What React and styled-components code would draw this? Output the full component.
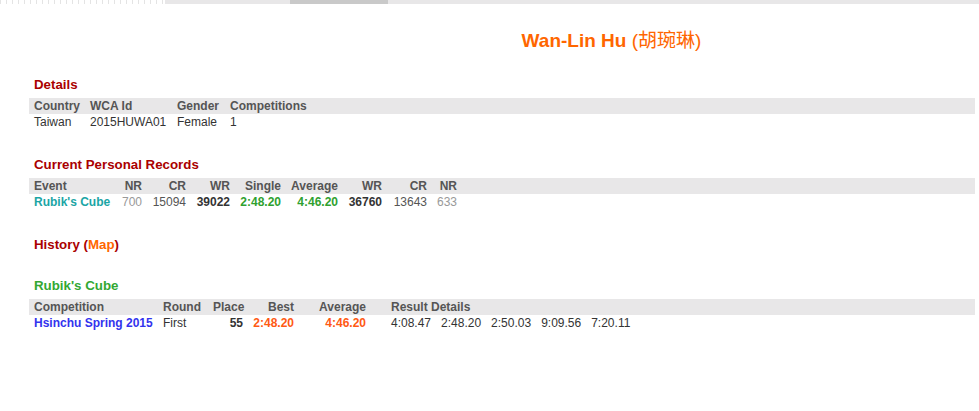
import React from "react";
import styled, { createGlobalStyle } from "styled-components";

const GlobalStyle = createGlobalStyle`
  html, body {
    margin: 0;
    padding: 0;
    background: #fff;
  }
  body {
    font-family: "Liberation Sans", Arial, sans-serif;
    font-size: 12px;
    color: #333;
  }
`;

const band = "#e8e7e8";

const TopStrip = styled.div`
  display: flex;
  height: 4px;
`;

const StripPart = styled.div`
  width: ${({ $w }) => $w};
  flex: ${({ $grow }) => ($grow ? 1 : "none")};
  background: ${({ $kind }) =>
    $kind === "gray"
      ? "#c9c9c9"
      : $kind === "dots"
      ? "repeating-linear-gradient(90deg, #e4e4e4 0 1px, #fff 1px 6px)"
      : band};
`;

const Page = styled.div`
  padding: 0 4px 40px 29px;
`;

const Title = styled.h1`
  margin: 25px 0 0;
  padding-left: 219px;
  text-align: center;
  font-size: 19px;
  line-height: 24px;
  font-weight: bold;
  color: #f60;
`;

const TitleCjk = styled.span`
  font-weight: normal;
  font-family: "Liberation Sans", "Noto Sans CJK TC", sans-serif;
`;

const Heading = styled.h2`
  margin: ${({ $top }) => $top || "27px"} 0 5px;
  padding-left: 5px;
  font-size: 13.3px;
  line-height: 16px;
  font-weight: bold;
  color: ${({ $color }) => $color || "#a00"};
`;

const MapLink = styled.span`
  color: #f60;
`;

const Row = styled.div`
  display: grid;
  grid-template-columns: ${({ $cols }) => $cols};
  line-height: 16px;
  font-size: 12px;
`;

const HeadRow = styled(Row)`
  background: ${band};
  font-weight: bold;
  color: #555;
`;

const Cell = styled.div`
  padding: 0 ${({ $pr }) => $pr || "5px"} 0 5px;
  white-space: nowrap;
  text-align: ${({ $right }) => ($right ? "right" : "left")};
  color: ${({ $color }) => $color || "inherit"};
  font-weight: ${({ $bold }) => ($bold ? "bold" : "inherit")};
`;

const Solves = styled.div`
  display: flex;
  gap: 10px;
`;

const detailCols = "56px 87px 53px 1fr";
const prCols = "86px 32px 44px 44px 51px 57px 44px 45px 30px 1fr";
const resCols = "129px 50px 40px 51px 87px 1fr";

const prHead = [
  ["Event", false],
  ["NR", true],
  ["CR", true],
  ["WR", true],
  ["Single", true],
  ["Average", true],
  ["WR", true],
  ["CR", true],
  ["NR", true],
];

const solves = ["4:08.47", "2:48.20", "2:50.03", "9:09.56", "7:20.11"];

export default function App() {
  return (
    <>
      <GlobalStyle />
      <TopStrip>
        <StripPart $w="165px" $kind="dots" />
        <StripPart $w="125px" />
        <StripPart $w="98px" $kind="gray" />
        <StripPart $grow />
      </TopStrip>
      <Page>
        <Title>
          Wan-Lin Hu <TitleCjk>(胡琬琳)</TitleCjk>
        </Title>

        <Heading $top="24px">Details</Heading>
        <HeadRow $cols={detailCols}>
          <Cell>Country</Cell>
          <Cell>WCA Id</Cell>
          <Cell>Gender</Cell>
          <Cell>Competitions</Cell>
        </HeadRow>
        <Row $cols={detailCols}>
          <Cell>Taiwan</Cell>
          <Cell>2015HUWA01</Cell>
          <Cell>Female</Cell>
          <Cell>1</Cell>
        </Row>

        <Heading>Current Personal Records</Heading>
        <HeadRow $cols={prCols}>
          {prHead.map(([label, right], i) => (
            <Cell key={i} $right={right}>
              {label}
            </Cell>
          ))}
          <Cell />
        </HeadRow>
        <Row $cols={prCols}>
          <Cell $bold $color="#1ba5a5">Rubik's Cube</Cell>
          <Cell $right $color="#999">700</Cell>
          <Cell $right $color="#555">15094</Cell>
          <Cell $right $bold>39022</Cell>
          <Cell $right $bold $color="#2fa12f">2:48.20</Cell>
          <Cell $right $bold $color="#2fa12f">4:46.20</Cell>
          <Cell $right $bold>36760</Cell>
          <Cell $right $color="#555">13643</Cell>
          <Cell $right $color="#999">633</Cell>
          <Cell />
        </Row>

        <Heading>
          History (<MapLink>Map</MapLink>)
        </Heading>

        <Heading $top="25px" $color="#33a833">Rubik's Cube</Heading>
        <HeadRow $cols={resCols}>
          <Cell>Competition</Cell>
          <Cell>Round</Cell>
          <Cell $right>Place</Cell>
          <Cell $right>Best</Cell>
          <Cell $right $pr="20px">Average</Cell>
          <Cell>Result Details</Cell>
        </HeadRow>
        <Row $cols={resCols}>
          <Cell $bold $color="#3333ee">Hsinchu Spring 2015</Cell>
          <Cell>First</Cell>
          <Cell $right $bold>55</Cell>
          <Cell $right $bold $color="#ff5a14">2:48.20</Cell>
          <Cell $right $bold $color="#ff5a14" $pr="20px">4:46.20</Cell>
          <Cell>
            <Solves>
              {solves.map((s) => (
                <span key={s}>{s}</span>
              ))}
            </Solves>
          </Cell>
        </Row>
      </Page>
    </>
  );
}
